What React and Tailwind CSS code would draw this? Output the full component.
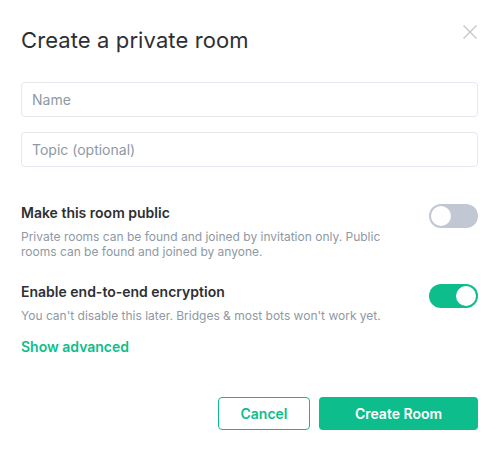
export default function App() {
  const font = { fontFamily: 'Inter, "Noto Sans", sans-serif' };
  return (
    <div className="w-[500px] h-[451px] bg-white relative" style={font}>
      <button className="absolute left-[462px] top-[24px] w-[16px] h-[16px] text-[#c1c6cd]">
        <svg viewBox="0 0 16 16" width="16" height="16" fill="none" stroke="currentColor" strokeWidth="1.3">
          <path d="M1.5 1.5L14.5 14.5M14.5 1.5L1.5 14.5" />
        </svg>
      </button>
      <div className="flex flex-col pl-[21px] pr-[22px] pt-[26px]">
        <h2 className="text-[22px] leading-[28px] tracking-[0.1px] text-[#2e2f32] font-normal">Create a private room</h2>
        <div className="mt-[28px] h-[35px] border border-[#e3e8f0] rounded-[4px] flex items-center px-[10px] text-[14px] text-[#8d99a5]">Name</div>
        <div className="mt-[15px] h-[35px] border border-[#e3e8f0] rounded-[4px] flex items-center px-[10px] text-[14px] text-[#8d99a5]">Topic (optional)</div>

        <div className="mt-[36px] flex items-start justify-between">
          <div className="w-[390px]">
            <div className="text-[14px] leading-[20px] font-semibold text-[#2e2f32]">Make this room public</div>
            <div className="mt-[6px] text-[12px] leading-[15px] text-[#8d99a5]">
              Private rooms can be found and joined by invitation only. Public rooms can be found and joined by anyone.
            </div>
          </div>
          <div className="mt-[1px] w-[49px] h-[24px] rounded-full bg-[#c1c8d4] p-[2px] flex items-center">
            <div className="w-[20px] h-[20px] rounded-full bg-white"></div>
          </div>
        </div>

        <div className="mt-[23px] flex items-start justify-between">
          <div className="w-[390px]">
            <div className="text-[14px] leading-[20px] font-semibold text-[#2e2f32]">Enable end-to-end encryption</div>
            <div className="mt-[6px] text-[12px] leading-[15px] text-[#8d99a5]">
              You can't disable this later. Bridges &amp; most bots won't work yet.
            </div>
          </div>
          <div className="mt-[2px] w-[49px] h-[24px] rounded-full bg-[#0dbd8b] p-[2px] flex items-center justify-end">
            <div className="w-[20px] h-[20px] rounded-full bg-white"></div>
          </div>
        </div>

        <div className="mt-[14px] text-[14px] leading-[20px] font-semibold text-[#0dbd8b]">Show advanced</div>

        <div className="mt-[40px] flex justify-end gap-[9px]">
          <button className="w-[92px] h-[33px] border border-[#0dbd8b] rounded-[4px] text-[#0dbd8b] text-[14px] font-semibold">Cancel</button>
          <button className="w-[159px] h-[33px] bg-[#0dbd8b] rounded-[4px] text-white text-[14px] font-semibold">Create Room</button>
        </div>
      </div>
    </div>
  );
}
